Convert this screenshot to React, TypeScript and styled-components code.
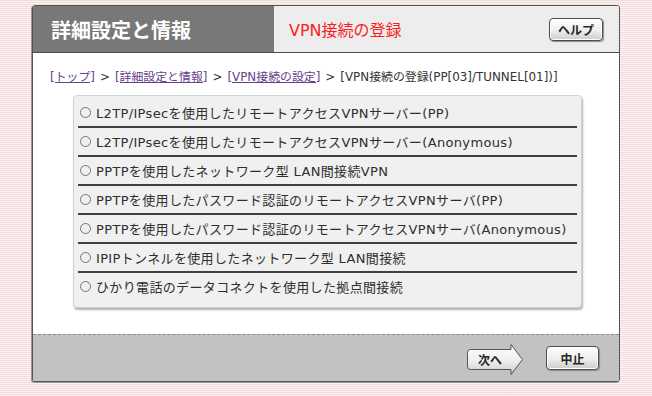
import React from 'react';
import styled, { createGlobalStyle } from 'styled-components';

const FONT = '"DejaVu Sans", "Noto Sans CJK JP", sans-serif';

const GlobalStyle = createGlobalStyle`
  html, body {
    margin: 0;
    padding: 0;
  }
  body {
    width: 652px;
    height: 396px;
    overflow: hidden;
    font-family: ${FONT};
    background: repeating-linear-gradient(
      to bottom,
      hsl(0, 60%, 91%) 0px,
      hsl(0, 60%, 91%) 1px,
      hsl(0, 50%, 97%) 1px,
      hsl(0, 50%, 97%) 2px
    );
  }
`;

const Page = styled.div`
  padding: 5px 32px 0 32px;
`;

const Panel = styled.div`
  width: 588px;
  height: 377px;
  box-sizing: border-box;
  border: 1px solid hsl(0, 0%, 33%);
  border-radius: 3px;
  overflow: hidden;
  display: flex;
  flex-direction: column;
  background: #fff;
  box-shadow: -1px 1px 0 hsl(0, 0%, 60%);
`;

const Header = styled.div`
  height: 46px;
  display: flex;
  border-bottom: 1px solid hsl(0, 0%, 30%);
  flex-shrink: 0;
`;

const HeaderTitle = styled.div`
  width: 241px;
  background: hsl(0, 0%, 47%);
  color: #fff;
  font-family: "Noto Sans CJK JP", sans-serif;
  font-size: 20px;
  font-weight: 700;
  display: flex;
  align-items: center;
  padding-left: 18px;
  box-sizing: border-box;
`;

const HeaderBar = styled.div`
  flex: 1;
  background: hsl(0, 0%, 93%);
  display: flex;
  align-items: center;
  justify-content: space-between;
  padding: 0 16px 0 15px;
`;

const PageName = styled.div`
  color: hsl(0, 95%, 55%);
  font-size: 16px;
`;

const GrayButton = styled.button<{ w: number; h: number }>`
  width: ${({ w }) => w}px;
  height: ${({ h }) => h}px;
  border: 1px solid hsl(0, 0%, 30%);
  border-radius: 4px;
  background: linear-gradient(to bottom, #fff 0%, hsl(0, 0%, 93%) 55%, hsl(0, 0%, 80%) 100%);
  box-shadow: inset 0 0 0 1px hsl(0, 0%, 100%), 1px 1px 1px hsl(0, 0%, 55%);
  font-family: "Noto Sans CJK JP", sans-serif;
  font-size: 12px;
  font-weight: 700;
  color: hsl(0, 0%, 15%);
  padding: 0;
  cursor: pointer;
`;

const Body = styled.div`
  flex: 1;
  display: flex;
  flex-direction: column;
  padding: 14px 0 0 17px;
`;

const Crumbs = styled.div`
  font-size: 11.9px;
  color: hsl(0, 0%, 20%);
  white-space: nowrap;
  height: 20px;
  line-height: 20px;
`;

const CrumbLink = styled.a`
  color: hsl(270, 35%, 40%);
  text-decoration: underline;
`;

const Sep = styled.span`
  margin: 0 5px;
`;

const ListBox = styled.div`
  margin: 8px 0 0 23px;
  width: 509px;
  box-sizing: border-box;
  background: hsl(0, 0%, 94%);
  border: 1px solid hsl(0, 0%, 82%);
  border-radius: 4px;
  box-shadow: 1px 2px 2px hsl(0, 0%, 70%);
  padding: 3px 4px 5px 4px;
`;

const Row = styled.label<{ last?: boolean }>`
  display: flex;
  align-items: center;
  height: 27px;
  border-bottom: 2px solid ${({ last }) => (last ? 'transparent' : 'hsl(0, 0%, 25%)')};
  font-size: 13px;
  letter-spacing: 0.35px;
  color: hsl(0, 0%, 18%);
  white-space: nowrap;
  cursor: pointer;
`;

const Radio = styled.span`
  width: 9px;
  height: 9px;
  border: 1px solid hsl(0, 0%, 45%);
  border-radius: 50%;
  margin: 0 5px 0 2px;
  flex-shrink: 0;
`;

const Footer = styled.div`
  height: 46px;
  flex-shrink: 0;
  background: hsl(0, 0%, 76%);
  border-top: 1px dashed hsl(0, 0%, 55%);
  display: flex;
  align-items: center;
  justify-content: flex-end;
  gap: 22px;
  padding-right: 20px;
`;

const NextButton = styled.button`
  position: relative;
  width: 58px;
  height: 33px;
  border: none;
  background: none;
  padding: 0;
  cursor: pointer;
  margin-top: 3px;
`;

const NextShape = styled.svg`
  position: absolute;
  inset: 0;
`;

const NextLabel = styled.span`
  position: relative;
  display: block;
  padding-right: 10px;
  font-family: "Noto Sans CJK JP", sans-serif;
  font-size: 12px;
  font-weight: 700;
  color: hsl(0, 0%, 15%);
`;

const options = [
  'L2TP/IPsecを使用したリモートアクセスVPNサーバー(PP)',
  'L2TP/IPsecを使用したリモートアクセスVPNサーバー(Anonymous)',
  'PPTPを使用したネットワーク型 LAN間接続VPN',
  'PPTPを使用したパスワード認証のリモートアクセスVPNサーバ(PP)',
  'PPTPを使用したパスワード認証のリモートアクセスVPNサーバ(Anonymous)',
  'IPIPトンネルを使用したネットワーク型 LAN間接続',
  'ひかり電話のデータコネクトを使用した拠点間接続',
];

const App = () => {
  return (
    <Page>
      <GlobalStyle />
      <Panel>
        <Header>
          <HeaderTitle>詳細設定と情報</HeaderTitle>
          <HeaderBar>
            <PageName>VPN接続の登録</PageName>
            <GrayButton w={54} h={23}>ヘルプ</GrayButton>
          </HeaderBar>
        </Header>
        <Body>
          <Crumbs>
            <CrumbLink>[トップ]</CrumbLink>
            <Sep>&gt;</Sep>
            <CrumbLink>[詳細設定と情報]</CrumbLink>
            <Sep>&gt;</Sep>
            <CrumbLink>[VPN接続の設定]</CrumbLink>
            <Sep>&gt;</Sep>
            <span>[VPN接続の登録(PP[03]/TUNNEL[01])]</span>
          </Crumbs>
          <ListBox>
            {options.map((o, i) => (
              <Row key={o} last={i === options.length - 1}>
                <Radio />
                {o}
              </Row>
            ))}
          </ListBox>
        </Body>
        <Footer>
          <NextButton>
            <NextShape width="58" height="33" viewBox="0 0 58 33">
              <defs>
                <linearGradient id="ng" x1="0" y1="0" x2="0" y2="1">
                  <stop offset="0" stopColor="#fff" />
                  <stop offset="0.55" stopColor="#eee" />
                  <stop offset="1" stopColor="#ccc" />
                </linearGradient>
              </defs>
              <path
                d="M4.5 6.5 H45 V1.5 L56.5 16.5 L45 31.5 V26.5 H4.5 Q1.5 26.5 1.5 23.5 V9.5 Q1.5 6.5 4.5 6.5 Z"
                fill="url(#ng)"
                stroke="#555"
                strokeWidth="1"
              />
            </NextShape>
            <NextLabel>次へ</NextLabel>
          </NextButton>
          <GrayButton w={53} h={24}>中止</GrayButton>
        </Footer>
      </Panel>
    </Page>
  );
};

export default App;
